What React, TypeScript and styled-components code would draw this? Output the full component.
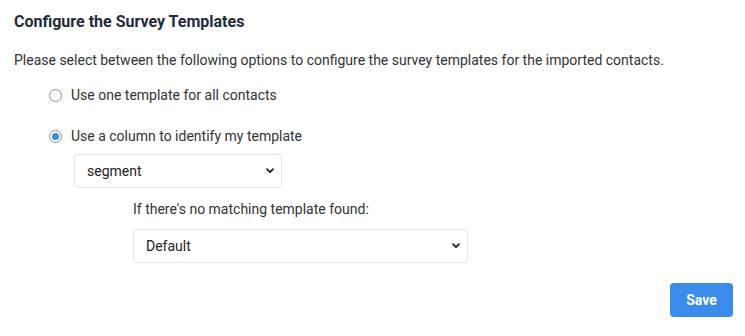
import React, { useState } from 'react';
import styled, { createGlobalStyle } from 'styled-components';

const GlobalStyle = createGlobalStyle`
  html, body {
    margin: 0;
    padding: 0;
    background: #fff;
  }
  body {
    font-family: Roboto, "Liberation Sans", Arial, sans-serif;
    color: #333;
  }
  * { box-sizing: border-box; }
`;

const chevron =
  "url(\"data:image/svg+xml;utf8,<svg xmlns='http://www.w3.org/2000/svg' width='8' height='6' viewBox='0 0 8 6'><path d='M1 1.2 L4 4.2 L7 1.2' fill='none' stroke='%23222' stroke-width='1.8' stroke-linecap='round' stroke-linejoin='round'/></svg>\")";

const App = () => {
  const [mode, setMode] = useState<'one' | 'column'>('column');
  const [column, setColumn] = useState('segment');
  const [fallback, setFallback] = useState('default');

  return (
    <>
      <GlobalStyle />
      <Page>
        <Title>Configure the Survey Templates</Title>
        <Description>
          Please select between the following options to configure the survey templates for the imported contacts.
        </Description>

        <Options>
          <Option>
            <Radio
              type="radio"
              name="mode"
              checked={mode === 'one'}
              onChange={() => setMode('one')}
            />
            Use one template for all contacts
          </Option>
          <Option>
            <Radio
              type="radio"
              name="mode"
              checked={mode === 'column'}
              onChange={() => setMode('column')}
            />
            Use a column to identify my template
          </Option>
        </Options>

        <Indent $left={60} $top={8}>
          <Select $width={208} value={column} onChange={(e) => setColumn(e.target.value)}>
            <option value="segment">segment</option>
            <option value="region">region</option>
          </Select>
        </Indent>

        <Indent $left={119} $top={11}>
          <FallbackLabel>If there's no matching template found:</FallbackLabel>
          <Select $width={335} value={fallback} onChange={(e) => setFallback(e.target.value)}>
            <option value="default">Default</option>
          </Select>
        </Indent>

        <Footer>
          <SaveButton type="button">Save</SaveButton>
        </Footer>
      </Page>
    </>
  );
};

const Page = styled.div`
  display: flex;
  flex-direction: column;
  align-items: flex-start;
  padding: 12px 12px 0 14px;
  width: 745px;
`;

const Title = styled.h3`
  margin: 0;
  font-size: 16px;
  line-height: 20px;
  font-weight: 700;
  color: #1f2b3e;
`;

const Description = styled.p`
  margin: 18px 0 0;
  font-size: 14px;
  line-height: 20px;
  color: #333;
`;

const Options = styled.div`
  display: flex;
  flex-direction: column;
  gap: 21px;
  margin-top: 15px;
  padding-left: 35px;
`;

const Option = styled.label`
  display: flex;
  align-items: center;
  gap: 9px;
  font-size: 14px;
  line-height: 20px;
  color: #333;
  cursor: pointer;
`;

const Radio = styled.input`
  appearance: none;
  margin: 0;
  width: 13px;
  height: 13px;
  border-radius: 50%;
  border: 1px solid #8d8d8d;
  background: #fff;
  display: grid;
  place-content: center;

  &::before {
    content: '';
    width: 7px;
    height: 7px;
    border-radius: 50%;
    background: #2f8cf0;
    transform: scale(0);
  }

  &:checked::before {
    transform: scale(1);
  }
`;

const Indent = styled.div<{ $left: number; $top: number }>`
  display: flex;
  flex-direction: column;
  align-items: flex-start;
  gap: 10px;
  margin-top: ${(p) => p.$top}px;
  padding-left: ${(p) => p.$left}px;
`;

const Select = styled.select<{ $width: number }>`
  appearance: none;
  width: ${(p) => p.$width}px;
  height: 34px;
  margin: 0;
  padding: 0 28px 0 12px;
  font-family: Roboto, "Liberation Sans", Arial, sans-serif;
  font-size: 14px;
  color: #222;
  background: #fff ${chevron} no-repeat right 7px center;
  border: 1px solid #e1e3e8;
  border-radius: 4px;
  outline: none;
`;

const FallbackLabel = styled.div`
  font-size: 14px;
  line-height: 20px;
  color: #333;
`;

const Footer = styled.div`
  display: flex;
  justify-content: flex-end;
  width: 100%;
  margin-top: 20px;
`;

const SaveButton = styled.button`
  width: 63px;
  height: 34px;
  border: none;
  border-radius: 4px;
  background: #3a8bea;
  color: #fff;
  font-family: Roboto, "Liberation Sans", Arial, sans-serif;
  font-size: 14px;
  font-weight: 700;
  cursor: pointer;
`;

export default App;
